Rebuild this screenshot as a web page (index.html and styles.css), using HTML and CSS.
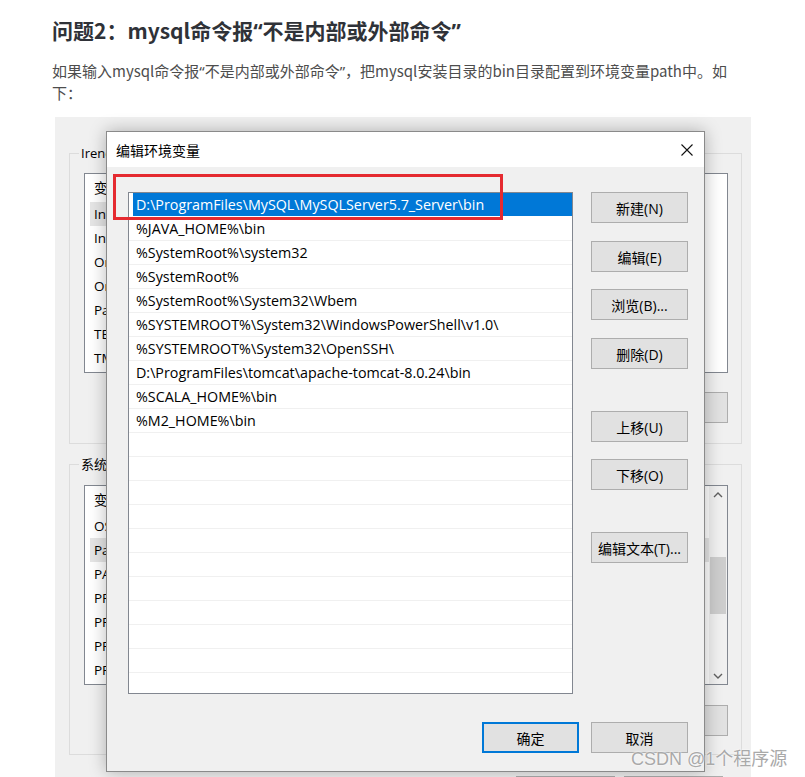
FILE: index.html
```html
<!DOCTYPE html>
<html lang="zh-CN">
<head>
<meta charset="utf-8">
<title>问题2：mysql命令报“不是内部或外部命令”</title>
<link rel="stylesheet" href="styles.css">
</head>
<body>
<article class="post">
  <h3 class="title">问题2：mysql命令报<span class="q">“</span>不是内部或外部命令<span class="q">”</span></h3>
  <p class="text">如果输入mysql命令报<span class="q">“</span>不是内部或外部命令<span class="q">”</span>，把mysql安装目录的bin目录配置到环境变量path中。如<br>下：</p>

  <div class="shot">
    <div class="bgwin">
      <div class="group g1">
        <span class="legend">Irene 的用户变量(U)</span>
        <div class="lb">
          <div class="lb-body">
            <div class="lb-head">变量</div>
            <div class="lb-row hl"><span>IntelliJ IDEA</span></div>
            <div class="lb-row"><span>IntelliJ IDEA Community Edition</span></div>
            <div class="lb-row"><span>OneDrive</span></div>
            <div class="lb-row"><span>OneDriveConsumer</span></div>
            <div class="lb-row"><span>Path</span></div>
            <div class="lb-row"><span>TEMP</span></div>
            <div class="lb-row"><span>TMP</span></div>
          </div>
        </div>
        <div class="wbtns">
          <span class="wbtn">新建(N)...</span>
          <span class="wbtn">编辑(E)...</span>
          <span class="wbtn">删除(D)</span>
        </div>
      </div>

      <div class="group g2">
        <span class="legend">系统变量(S)</span>
        <div class="lb">
          <div class="lb-body">
            <div class="lb-head">变量</div>
            <div class="lb-row"><span>OS</span></div>
            <div class="lb-row hl"><span>Path</span></div>
            <div class="lb-row"><span>PATHEXT</span></div>
            <div class="lb-row"><span>PROCESSOR_ARCHITECTURE</span></div>
            <div class="lb-row"><span>PROCESSOR_IDENTIFIER</span></div>
            <div class="lb-row"><span>PROCESSOR_LEVEL</span></div>
            <div class="lb-row"><span>PROCESSOR_REVISION</span></div>
          </div>
          <div class="sbar">
            <div class="sb-arrow"><svg width="10" height="6" viewBox="0 0 10 6"><path d="M1 5 L5 1 L9 5" fill="none" stroke="#606060" stroke-width="1.4"/></svg></div>
            <div class="sb-track"><div class="sb-thumb"></div></div>
            <div class="sb-arrow"><svg width="10" height="6" viewBox="0 0 10 6"><path d="M1 1 L5 5 L9 1" fill="none" stroke="#606060" stroke-width="1.4"/></svg></div>
          </div>
        </div>
        <div class="wbtns">
          <span class="wbtn">新建(W)...</span>
          <span class="wbtn">编辑(I)...</span>
          <span class="wbtn">删除(L)</span>
        </div>
      </div>

      <div class="wfoot">
        <span class="wbtn"></span>
        <span class="wbtn"></span>
      </div>
    </div>

    <div class="dialog">
      <div class="dlg-title">
        <span class="dlg-caption">编辑环境变量</span>
        <svg class="dlg-close" width="12" height="12" viewBox="0 0 12 12"><path d="M0.5 0.5 L11.5 11.5 M11.5 0.5 L0.5 11.5" stroke="#111" stroke-width="1.1" fill="none"/></svg>
      </div>
      <div class="dlg-body">
        <div class="dlg-main">
          <div class="plist">
            <div class="prow sel"><span>D:\ProgramFiles\MySQL\MySQLServer5.7_Server\bin</span></div>
            <div class="prow">%JAVA_HOME%\bin</div>
            <div class="prow">%SystemRoot%\system32</div>
            <div class="prow">%SystemRoot%</div>
            <div class="prow">%SystemRoot%\System32\Wbem</div>
            <div class="prow">%SYSTEMROOT%\System32\WindowsPowerShell\v1.0\</div>
            <div class="prow">%SYSTEMROOT%\System32\OpenSSH\</div>
            <div class="prow">D:\ProgramFiles\tomcat\apache-tomcat-8.0.24\bin</div>
            <div class="prow">%SCALA_HOME%\bin</div>
            <div class="prow">%M2_HOME%\bin</div>
            <div class="prow"></div>
            <div class="prow"></div>
            <div class="prow"></div>
            <div class="prow"></div>
            <div class="prow"></div>
            <div class="prow"></div>
            <div class="prow"></div>
            <div class="prow"></div>
            <div class="prow"></div>
            <div class="prow"></div>
            <div class="prow"></div>
          </div>
          <div class="dlg-col">
            <span class="btn">新建(N)</span>
            <span class="btn m18">编辑(E)</span>
            <span class="btn m17">浏览(B)...</span>
            <span class="btn m18">删除(D)</span>
            <span class="btn m42">上移(U)</span>
            <span class="btn m17">下移(O)</span>
            <span class="btn m42">编辑文本(T)...</span>
          </div>
        </div>
        <div class="dlg-foot">
          <span class="btn primary">确定</span>
          <span class="btn">取消</span>
        </div>
      </div>
    </div>

    <div class="redbox"></div>
    <div class="watermark">CSDN @1个程序源</div>
  </div>
</article>
</body>
</html>
```

FILE: styles.css
```css
* { box-sizing: border-box; }

html, body {
  margin: 0;
  padding: 0;
  overflow: hidden;
  background: #fff;
}

.post {
  padding: 16px 0 0 52px;
  font-family: "Noto Sans CJK SC", sans-serif;
}

.title {
  margin: 0;
  font-size: 21px;
  line-height: 28px;
  font-weight: 700;
  color: #2f3238;
}

.q {
  font-family: "Noto Sans", "DejaVu Sans", sans-serif;
}

.text {
  margin: 15px 0 0;
  font-size: 15px;
  line-height: 22px;
  color: #4d4d4d;
  white-space: nowrap;
}

.shot {
  position: relative;
  margin: 13px 0 0 3px;
  width: 696px;
  height: 661px;
  background: #f0f0f0;
  font-family: "Open Sans", "Noto Sans CJK SC", sans-serif;
  font-size: 13.5px;
  color: #000;
}

/* background window */
.bgwin {
  padding: 36px 0 0 14px;
}

.group {
  width: 673px;
  height: 291px;
  border: 1px solid #dcdcdc;
  padding: 0 13px 0 14px;
}

.g2 { margin-top: 20px; }

.legend {
  display: block;
  width: max-content;
  margin: -10px 0 0 -5px;
  padding: 0 2px;
  line-height: 18px;
  background: #f0f0f0;
  font-size: 13px;
}

.lb {
  display: flex;
  margin-top: 11px;
  height: 200px;
  background: #fff;
  border: 1px solid #828790;
  overflow: hidden;
}

.g2 .lb { margin-top: 12px; }

.lb-body { flex: 1; }

.lb-head {
  height: 28px;
  line-height: 28px;
  padding-left: 9px;
}

.lb-row {
  height: 24px;
  padding-left: 5px;
}

.lb-row span {
  display: block;
  height: 24px;
  line-height: 24px;
  padding-left: 4px;
  white-space: nowrap;
}

.lb-row.hl span { background: #e5e5e5; }

.g1 .lb-row.hl span { width: 600px; }

.sbar {
  width: 18px;
  display: flex;
  flex-direction: column;
  background: #f0f0f0;
}

.sb-arrow {
  height: 17px;
  display: flex;
  align-items: center;
  justify-content: center;
}

.sb-track { flex: 1; padding: 54px 1px 0; }

.sb-thumb {
  height: 57px;
  background: #cdcdcd;
}

.wbtns {
  display: flex;
  justify-content: flex-end;
  gap: 9px;
  margin-top: 19px;
}

.g2 .wbtns { margin-top: 20px; }

.wbtn {
  width: 99px;
  height: 31px;
  display: flex;
  align-items: center;
  justify-content: center;
  background: #e1e1e1;
  border: 1px solid #adadad;
  font-size: 13.5px;
}

.wfoot {
  display: flex;
  justify-content: flex-end;
  gap: 9px;
  margin-top: 21px;
  padding-right: 28px;
}

/* dialog */
.dialog {
  position: absolute;
  left: 51px;
  top: 14px;
  width: 599px;
  height: 641px;
  background: #f0f0f0;
  border: 1px solid #8a8a8a;
  box-shadow: 0 0 16px rgba(0, 0, 0, 0.28);
}

.dlg-title {
  height: 35px;
  background: #fff;
  display: flex;
  align-items: center;
  justify-content: space-between;
  padding: 0 11px 0 9px;
}

.dlg-caption {
  font-family: "Noto Sans CJK SC", sans-serif;
  font-size: 14px;
}

.dlg-close { display: block; }

.dlg-body {
  padding: 25px 16px 0 21px;
}

.dlg-main {
  display: flex;
  gap: 18px;
}

.plist {
  width: 445px;
  height: 502px;
  background: #fff;
  border: 1px solid #828790;
  overflow: hidden;
}

.prow {
  height: 24px;
  line-height: 23px;
  padding-left: 7px;
  border-bottom: 1px solid #f0f0f0;
  white-space: nowrap;
  font-size: 14.3px;
}

.prow.sel {
  padding-left: 4px;
  border-bottom-color: #fff;
}

.prow.sel span {
  display: block;
  height: 23px;
  padding-left: 3px;
  background: #0078d7;
  color: #fff;
}

.dlg-col {
  display: flex;
  flex-direction: column;
  width: 97px;
}

.btn {
  width: 97px;
  height: 31px;
  display: flex;
  align-items: center;
  justify-content: center;
  background: #e1e1e1;
  border: 1px solid #adadad;
  font-size: 14px;
  white-space: nowrap;
}

.m17 { margin-top: 17px; }
.m18 { margin-top: 18px; }
.m42 { margin-top: 42px; }

.dlg-foot {
  display: flex;
  justify-content: flex-end;
  gap: 12px;
  margin-top: 28px;
}

.btn.primary {
  border: 2px solid #0078d7;
}

/* overlays */
.redbox {
  position: absolute;
  left: 58px;
  top: 57px;
  width: 390px;
  height: 46px;
  border: 3px solid #e52a30;
}

.watermark {
  position: absolute;
  left: 576px;
  top: 631px;
  font-family: "Liberation Sans", "Noto Sans CJK SC", sans-serif;
  font-size: 18px;
  line-height: 22px;
  color: #a9a9a9;
  white-space: nowrap;
  text-shadow: 0 0 1px #fff, 0 0 2px #fff;
}
```
